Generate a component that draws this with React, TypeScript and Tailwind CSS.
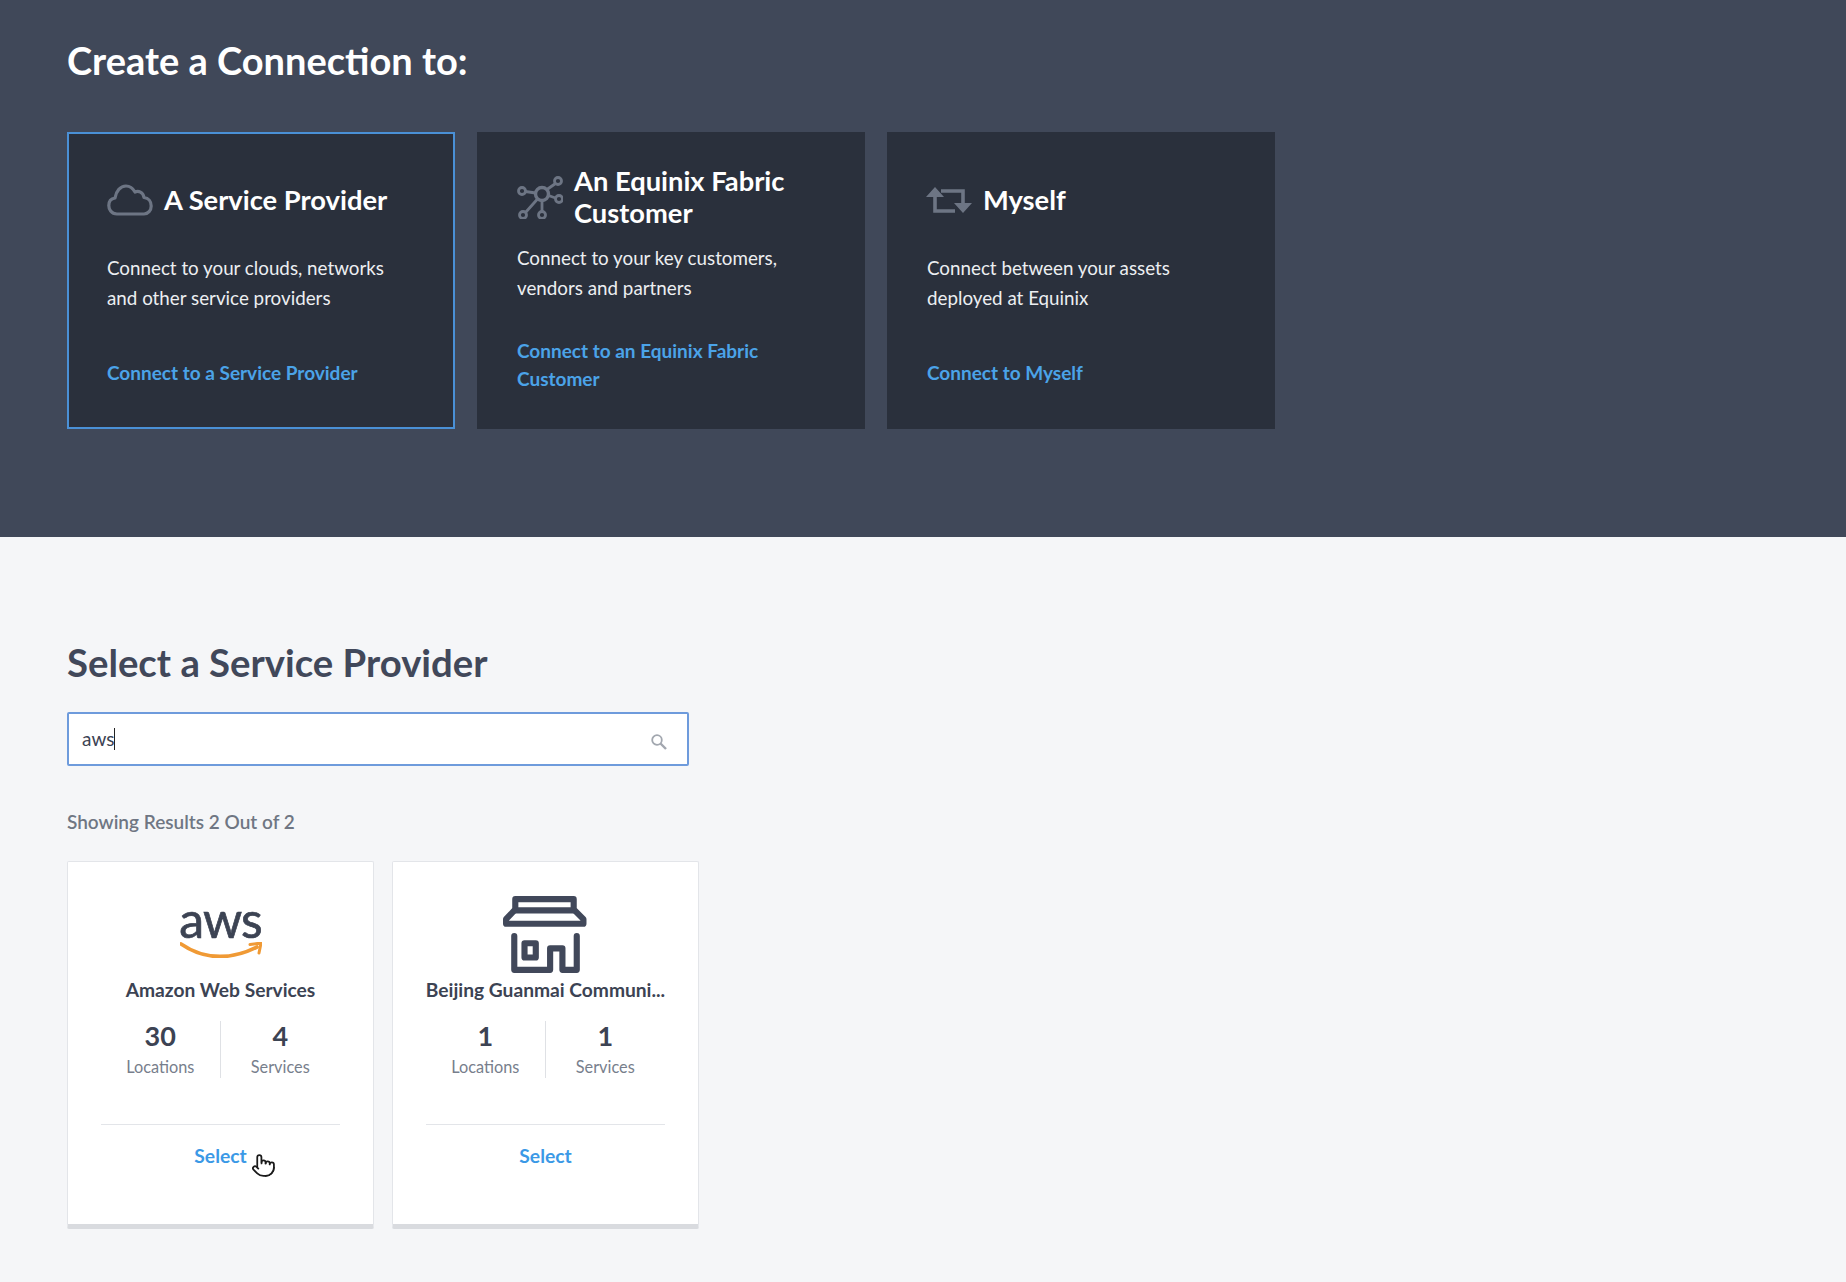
import { Pointer } from "lucide-react";

const connections = [
  {
    title: "A Service Provider",
    desc: ["Connect to your clouds, networks", "and other service providers"],
    link: ["Connect to a Service Provider"],
    icon: "cloud",
    card: "pt-[34px] border-2 border-[#4a90d6] pl-[38px]",
    descGap: "mt-[21px]",
    linkGap: "mt-[46px]",
  },
  {
    title: "An Equinix Fabric Customer",
    desc: ["Connect to your key customers,", "vendors and partners"],
    link: ["Connect to an Equinix Fabric", "Customer"],
    icon: "network",
    card: "pt-[33px] pl-10",
    descGap: "mt-[14px]",
    linkGap: "mt-[34px]",
  },
  {
    title: "Myself",
    desc: ["Connect between your assets", "deployed at Equinix"],
    link: ["Connect to Myself"],
    icon: "repeat",
    card: "pt-[36px] pl-10",
    descGap: "mt-[21px]",
    linkGap: "mt-[46px]",
  },
];

function CloudIcon() {
  return (
    <svg width="46" height="32" viewBox="0 0 46 32" fill="none" stroke="#6d7584" strokeWidth="3.2" className="shrink-0">
      <path d="M10 30C4 30 1.800 25 1.800 21.500C1.800 17 4.500 14.500 8 14C9 7 13.500 2 19 2C23 2 26 4.500 28 8C31.500 6.500 36 8 37 13.500C41.500 14 44.200 17.500 44.200 22C44.200 26.500 41 30 37 30Z" strokeLinejoin="round" />
    </svg>
  );
}

function NetworkIcon() {
  return (
    <svg width="46" height="44" viewBox="17 15 46 44" fill="none" stroke="#6d7584" strokeWidth="2.8" className="shrink-0">
      <circle cx="42" cy="34" r="6.500" strokeWidth="3.400" />
      <circle cx="22" cy="31" r="3.500" />
      <circle cx="58" cy="21" r="3.500" />
      <circle cx="59" cy="39" r="3.500" />
      <circle cx="42" cy="55" r="3.500" />
      <circle cx="23" cy="55" r="3.500" />
      <path d="M25.500 31.500L35.500 33M47 29.500L55.500 23.500M48.500 35.500L55.500 38M42 40.500V51.500M37.500 39L25.500 52.500" />
    </svg>
  );
}

function RepeatIcon() {
  return (
    <svg width="48" height="30" viewBox="16 26 48 30" fill="none" stroke="#6d7584" strokeWidth="3.600" className="shrink-0 -ml-[3px]">
      <path d="M27 36V52H47M33 32H55V46" />
      <path d="M27 28L36 38H18Z M55 54L46 44H64Z" fill="#6d7584" stroke="none" />
    </svg>
  );
}

function StoreIcon() {
  return (
    <svg width="84" height="79" viewBox="0 0 82 75" fill="none" stroke="#41485a" strokeWidth="6" strokeLinejoin="round" strokeLinecap="round" className="-ml-[2px]">
      <path d="M12 3H69V13L78.500 22.500V27H3V22.500L12 13Z" />
      <path d="M12 14H69" />
      <path d="M11 39V72H46V51H58V72H72V39" />
      <rect x="21" y="46" width="11" height="14" />
    </svg>
  );
}

function AwsLogo() {
  return (
    <div className="flex flex-col items-center mb-[12px]">
      <span className="text-[50px] leading-[40px] text-[#3c4353] tracking-[-1px] h-[40px] [-webkit-text-stroke:0.7px_#3c4353]">aws</span>
      <svg width="82" height="16" viewBox="0 0 82 16" fill="none" className="mt-[3px]">
        <path d="M1 2C14 11 27 14.500 40 14.500C54 14.500 67 10 77 5" stroke="#f09a35" strokeWidth="3.800" strokeLinecap="round" />
        <path d="M70 2.500L81 1L79 11" stroke="#f09a35" strokeWidth="3" strokeLinejoin="round" strokeLinecap="round" />
      </svg>
    </div>
  );
}

function Icon({ name }: { name: string }) {
  if (name === "cloud") return <CloudIcon />;
  if (name === "network") return <NetworkIcon />;
  return <RepeatIcon />;
}

function ProviderCard({
  name,
  locations,
  services,
  logo,
  hover,
}: {
  name: string;
  locations: number;
  services: number;
  logo: React.ReactNode;
  hover?: boolean;
}) {
  return (
    <div className="w-[307px] h-[368px] bg-white border border-[#e3e5e9] border-b-[5px] border-b-[#d9dbdf] pt-[35px] px-[33px] rounded-[2px]">
      <div className="h-[75px] flex items-center justify-center">{logo}</div>
      <div className="mt-[6px] -mx-4 text-center text-[19.2px] leading-[24px] font-bold text-[#3c4353] whitespace-nowrap">{name}</div>
      <div className="mt-[19px] grid grid-cols-2 h-[56px]">
        <div className="text-center border-r border-[#dfe1e5]">
          <div className="text-[27px] leading-[30px] font-bold text-[#3c4353]">{locations}</div>
          <div className="mt-[5px] text-[16.3px] leading-[22px] text-[#777e8c]">Locations</div>
        </div>
        <div className="text-center">
          <div className="text-[27px] leading-[30px] font-bold text-[#3c4353]">{services}</div>
          <div className="mt-[5px] text-[16.3px] leading-[22px] text-[#777e8c]">Services</div>
        </div>
      </div>
      <div className="mt-[47px] border-t border-[#e3e5e9]" />
      <div className="relative mt-[19px] text-center text-[19.3px] leading-[24px] font-bold text-[#3b99e6]">
        Select
        {hover && (
          <Pointer size={25} fill="#ffffff" stroke="#1a1a1a" strokeWidth={1.7} className="absolute left-[150px] top-[9px]" />
        )}
      </div>
    </div>
  );
}

export default function App() {
  return (
    <div className="min-h-[1282px] bg-[#f5f6f8] font-[Lato,sans-serif]">
      {/* Top band */}
      <section className="h-[537px] bg-[#404859] px-[67px] pt-[35px]">
        <h1 className="text-[38px] leading-[50px] font-bold text-white">Create a Connection to:</h1>
        <div className="mt-[47px] flex gap-[22px]">
          {connections.map((c) => (
            <div key={c.title} className={`w-[388px] h-[297px] bg-[#2a303c] pr-8 ${c.card}`}>
              <div className="flex items-center gap-[11px] min-h-[64px]">
                <Icon name={c.icon} />
                <div className="text-[27.3px] leading-[32px] font-bold text-white">{c.title}</div>
              </div>
              <div className={`${c.descGap} text-[18.8px] leading-[30px] text-[#eceef1]`}>
                {c.desc.map((line) => (
                  <div key={line}>{line}</div>
                ))}
              </div>
              <div className={`${c.linkGap} text-[19px] leading-[28px] font-bold text-[#4ba3e8]`}>
                {c.link.map((line) => (
                  <div key={line}>{line}</div>
                ))}
              </div>
            </div>
          ))}
        </div>
      </section>

      {/* Provider search */}
      <section className="px-[67px] pt-[101px]">
        <h2 className="text-[38.3px] leading-[48px] font-bold text-[#41485a]">Select a Service Provider</h2>
        <div className="mt-[26px] w-[622px] h-[54px] bg-white border-2 border-[#6e9bdc] rounded-[2px] flex items-center justify-between pl-[13px] pr-[19px]">
          <div className="flex items-center text-[19px] text-[#3c4353]">
            aws
            <span className="w-px h-[22px] bg-[#222222]" />
          </div>
          <svg width="18" height="18" viewBox="0 0 18 18" fill="none" stroke="#a2a7af" strokeWidth="1.800" className="mt-[5px]">
            <circle cx="7" cy="7" r="4.800" />
            <path d="M10.500 10.500L16 16" strokeWidth="2.400" />
          </svg>
        </div>
        <div className="mt-[44px] text-[19px] leading-[24px] font-semibold text-[#6f7683]">Showing Results 2 Out of 2</div>
        <div className="mt-[27px] flex gap-[18px]">
          <ProviderCard name="Amazon Web Services" locations={30} services={4} logo={<AwsLogo />} hover />
          <ProviderCard name="Beijing Guanmai Communi..." locations={1} services={1} logo={<StoreIcon />} />
        </div>
      </section>
    </div>
  );
}
